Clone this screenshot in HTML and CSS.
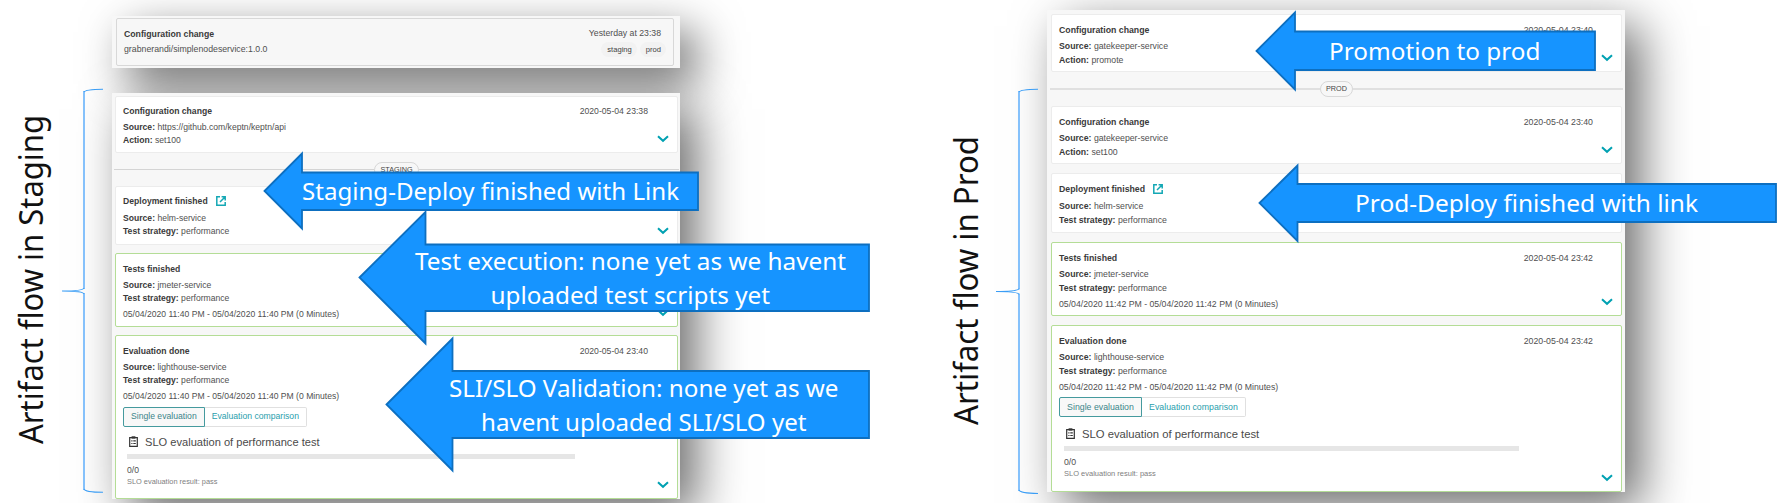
FILE: index.html
```html
<!DOCTYPE html>
<html lang="en">
<head>
<meta charset="utf-8">
<title>Artifact flow</title>
<link rel="stylesheet" href="styles.css">
</head>
<body>
<svg class="defs" width="0" height="0" aria-hidden="true">
  <symbol id="chevron" viewBox="0 0 12 8"><path d="M1 1.2 6 5.8 11 1.2" fill="none" stroke="#00a1b2" stroke-width="2"/></symbol>
  <symbol id="link" viewBox="0 0 10 10"><path d="M4 .8H.8V9.2H9.2V6M5.6 .8H9.2V4.4M9 1 4 6" fill="none" stroke="#14a8b5" stroke-width="1.5"/></symbol>
  <symbol id="clip" viewBox="0 0 9 11"><path d="M.7 1.7H8.3V10.3H.7Z" fill="none" stroke="#333" stroke-width="1.2"/><path d="M2.6 .3H6.4V2.6H2.6Z" fill="#333"/><path d="M2.3 4.8H3.5M4.3 4.8H6.8M2.3 7.5H3.5M4.3 7.5H6.8" stroke="#333" stroke-width="1.2"/></symbol>
</svg>
<main class="stage">
  <svg class="side" width="112" height="503">
    <text class="side-text" transform="translate(43 444) rotate(-90)" textLength="329" lengthAdjust="spacingAndGlyphs">Artifact flow in Staging</text>
    <path class="brace" d="M84 91V289M84 293V490"/>
    <path class="brace-tip" d="M103 89.2Q85 89.5 84 92M84 288Q83.5 291 62 291Q83.5 291 84 294M84 489Q85 492.2 103 492.3"/>
  </svg>
  <div class="column">
    <section class="summary">
      <div class="summary-card">
        <div>
          <h3 class="title">Configuration change</h3>
          <p class="image-name">grabnerandi/simplenodeservice:1.0.0</p>
        </div>
        <div class="summary-side">
          <span class="when">Yesterday at 23:38</span>
          <div class="tags"><span class="tag">staging</span><span class="tag">prod</span></div>
        </div>
      </div>
    </section>
    <section class="panel staging">
      <article class="card config">
        <div class="body"><h3 class="title">Configuration change</h3><p class="row"><b>Source:</b> https://github.com/keptn/keptn/api</p><p class="row"><b>Action:</b> set100</p></div>
        <time class="date">2020-05-04 23:38</time><svg class="chev"><use href="#chevron"/></svg>
      </article>
      <div class="divider"><span class="pill">STAGING</span></div>
      <article class="card deploy">
        <div class="body"><h3 class="title">Deployment finished <svg class="link"><use href="#link"/></svg></h3><p class="row"><b>Source:</b> helm-service</p><p class="row"><b>Test strategy:</b> performance</p></div>
        <svg class="chev"><use href="#chevron"/></svg>
      </article>
      <article class="card ok tests">
        <div class="body"><h3 class="title">Tests finished</h3><p class="row"><b>Source:</b> jmeter-service</p><p class="row"><b>Test strategy:</b> performance</p><p class="row span">05/04/2020 11:40 PM - 05/04/2020 11:40 PM (0 Minutes)</p></div>
        <svg class="chev"><use href="#chevron"/></svg>
      </article>
      <article class="card ok evaluation">
        <div class="body"><h3 class="title">Evaluation done</h3><p class="row"><b>Source:</b> lighthouse-service</p><p class="row"><b>Test strategy:</b> performance</p><p class="row span">05/04/2020 11:40 PM - 05/04/2020 11:40 PM (0 Minutes)</p>
          <div class="tabs"><span class="tab active">Single evaluation</span><span class="tab">Evaluation comparison</span></div>
          <div class="slo"><h4 class="slo-title"><svg class="clip"><use href="#clip"/></svg>SLO evaluation of performance test</h4><div class="bar"></div><p class="score">0/0</p><p class="result">SLO evaluation result: pass</p></div></div>
        <time class="date">2020-05-04 23:40</time><svg class="chev"><use href="#chevron"/></svg>
      </article>
    </section>
  </div>
  <svg class="side second" width="112" height="503">
    <text class="side-text" transform="translate(43 425) rotate(-90)" textLength="289" lengthAdjust="spacingAndGlyphs">Artifact flow in Prod</text>
    <path class="brace" d="M84 91V289.5M84 293.5V491"/>
    <path class="brace-tip" d="M103 89.2Q85 89.5 84 92M84 288.5Q83.5 291.5 61 291.5Q83.5 291.5 84 294.5M84 490Q85 493.2 103 493.5"/>
  </svg>
  <section class="panel prod">
    <article class="card config first">
      <div class="body"><h3 class="title">Configuration change</h3><p class="row"><b>Source:</b> gatekeeper-service</p><p class="row"><b>Action:</b> promote</p></div>
      <time class="date">2020-05-04 23:40</time><svg class="chev"><use href="#chevron"/></svg>
    </article>
    <div class="divider"><span class="pill">PROD</span></div>
    <article class="card config">
      <div class="body"><h3 class="title">Configuration change</h3><p class="row"><b>Source:</b> gatekeeper-service</p><p class="row"><b>Action:</b> set100</p></div>
      <time class="date">2020-05-04 23:40</time><svg class="chev"><use href="#chevron"/></svg>
    </article>
    <article class="card deploy">
      <div class="body"><h3 class="title">Deployment finished <svg class="link"><use href="#link"/></svg></h3><p class="row"><b>Source:</b> helm-service</p><p class="row"><b>Test strategy:</b> performance</p></div>
    </article>
    <article class="card ok tests">
      <div class="body"><h3 class="title">Tests finished</h3><p class="row"><b>Source:</b> jmeter-service</p><p class="row"><b>Test strategy:</b> performance</p><p class="row span">05/04/2020 11:42 PM - 05/04/2020 11:42 PM (0 Minutes)</p></div>
      <time class="date">2020-05-04 23:42</time><svg class="chev"><use href="#chevron"/></svg>
    </article>
    <article class="card ok evaluation">
      <div class="body"><h3 class="title">Evaluation done</h3><p class="row"><b>Source:</b> lighthouse-service</p><p class="row"><b>Test strategy:</b> performance</p><p class="row span">05/04/2020 11:42 PM - 05/04/2020 11:42 PM (0 Minutes)</p>
        <div class="tabs"><span class="tab active">Single evaluation</span><span class="tab">Evaluation comparison</span></div>
        <div class="slo"><h4 class="slo-title"><svg class="clip"><use href="#clip"/></svg>SLO evaluation of performance test</h4><div class="bar"></div><p class="score">0/0</p><p class="result">SLO evaluation result: pass</p></div></div>
      <time class="date">2020-05-04 23:42</time><svg class="chev"><use href="#chevron"/></svg>
    </article>
  </section>
  <svg class="callouts" width="1789" height="503">
    <path class="arrow" d="M264.500 191 302 153.500V172.500H698V210H302V228.500Z"/>
    <path class="arrow" d="M359.500 277.500 425.500 212V244.500H869V311H425.500V343.500Z"/>
    <path class="arrow" d="M386.500 404.500 452.500 338.500V371H869V438H452.500V470.500Z"/>
    <path class="arrow" d="M1256.500 51 1295 12.500V31.500H1595V70H1295V89.500Z"/>
    <path class="arrow" d="M1259.500 203 1297.500 165.500V184H1776V222H1297.500V241Z"/>
    <g class="callout-text">
      <text x="302" y="200" textLength="377" lengthAdjust="spacingAndGlyphs">Staging-Deploy finished with Link</text>
      <text x="415" y="270" textLength="431" lengthAdjust="spacingAndGlyphs">Test execution: none yet as we havent</text>
      <text x="490.500" y="304" textLength="279.500" lengthAdjust="spacingAndGlyphs">uploaded test scripts yet</text>
      <text x="449" y="397" textLength="389.500" lengthAdjust="spacingAndGlyphs">SLI/SLO Validation: none yet as we</text>
      <text x="481" y="431" textLength="325.500" lengthAdjust="spacingAndGlyphs">havent uploaded SLI/SLO yet</text>
      <text x="1329" y="60" textLength="211.500" lengthAdjust="spacingAndGlyphs">Promotion to prod</text>
      <text x="1355" y="212" textLength="343" lengthAdjust="spacingAndGlyphs">Prod-Deploy finished with link</text>
    </g>
  </svg>
</main>
</body>
</html>
```

FILE: styles.css
```css
* { box-sizing: border-box; margin: 0; padding: 0; }
body { width: 1789px; height: 503px; overflow: hidden; background: #fff; font-family: "Liberation Sans", Arial, sans-serif; color: #505050; }
svg { display: block; flex: none; }
.defs { position: absolute; }
.stage { position: relative; display: flex; align-items: flex-start; height: 503px; overflow: hidden; }

.side { position: relative; z-index: 1; }
.second { margin-left: 255px; }
.side-text { font: 32px "Noto Sans", sans-serif; fill: #111; }
.brace { fill: none; stroke: #85c1fb; stroke-width: 2; }
.brace-tip { fill: none; stroke: #3a9df5; stroke-width: 1.1; }

/* Shadows sit on a layer below both panels of the column */
.column { isolation: isolate; width: 568px; padding-top: 16px; --u: 1px; }
.summary, .panel { position: relative; background: #f7f7f7; }
.prod { isolation: isolate; }
.summary::before, .panel::before { content: ""; position: absolute; z-index: -1; inset: 0; box-shadow: 16px 16px 46px rgba(0, 0, 0, .58); }
.summary { height: 52px; padding: 2px 6px 2px 4px; }
.summary-card { display: flex; justify-content: space-between; height: 48px; padding: 7px 7px 0; border: 1px solid #d8d8d8; border-radius: 2px; }
.title { display: flex; align-items: center; height: calc(var(--u) * 16.5); font-size: calc(var(--u) * 8.62); font-weight: 700; color: #3a3a3a; white-space: pre; }
.image-name { font-size: 8.75px; line-height: 17px; }
.summary .title { font-size: 8.72px; height: 15px; }
.summary-side { display: flex; flex-direction: column; align-items: flex-end; }
.when { margin-right: 5px; font-size: 8.7px; line-height: 14px; }
.tags { display: flex; gap: 3px; margin-top: 2px; }
.tag { padding: 0 5px 0 6px; border-radius: 8px; background: #f2f2f2; font-size: 7.6px; line-height: 15px; color: #444; }

.panel { display: flex; flex-direction: column; }
.staging { height: 406px; margin-top: 25px; padding: 3px 2px 0 3px; }
.prod { --u: 1.016px; width: 578px; height: 482px; margin-top: 10px; padding: 4px 3px 0 4px; }
.card { display: flex; flex: none; padding: 6px 7px; border: 1px solid #ececec; border-radius: 2px; background: #fff; }
.ok { border-color: #b4dd96; }
.body { flex: 1; }
.row { height: calc(var(--u) * 13.8); font-size: calc(var(--u) * 8.6); line-height: calc(var(--u) * 13.8); white-space: nowrap; }
.row b { color: #3a3a3a; }
.span { margin-top: calc(var(--u) * 2.2); }
.date { margin-right: 3px; font-size: calc(var(--u) * 8.66); line-height: calc(var(--u) * 16.5); }
.chev { width: 12px; height: 8px; align-self: flex-end; margin: 0 0 3px 6px; }
.link { width: 10px; height: 10px; margin-left: 6px; }

.config { height: 57px; }
.deploy { height: 59px; }
.tests { height: 74px; margin-top: 8px; }
.evaluation { height: 164px; margin-top: 8px; }
.staging .title { margin-bottom: 1px; }
.staging .deploy .title { height: 16px; margin-bottom: 2.5px; }
.staging .ok { padding-top: 7px; }
.staging .date { margin-right: 4px; }
.staging .slo-title { margin-top: 7px; }
.prod .config { height: 58px; }
.prod .deploy { height: 60px; margin-top: 9px; }
.prod .deploy .title { height: 16px; margin-bottom: 1.5px; }
.prod .tests { margin-top: 9px; }
.prod .evaluation { height: 167px; margin-top: 9px; }
.prod .card { padding-top: 7px; }
.chev { position: relative; left: -1px; }

.divider { display: flex; align-items: center; justify-content: center; height: 33px; margin: 0 -1px; }
.divider::before, .divider::after { content: ""; flex: 1; height: 1px; background: #d4d4d4; }
.prod .divider { height: 34px; }
.prod .divider::before, .prod .divider::after { height: 2px; background: #e0e0e0; }
.pill { padding: 0 5px; border: 1px solid #d8d8d8; border-radius: 8px; font-size: 7.25px; line-height: 14px; color: #444; }

.tabs { display: flex; margin-top: calc(var(--u) * 3); }
.tab { padding: 0 calc(var(--u) * 7); border: 1px solid #e0e0e0; border-left: 0; border-radius: 0 2px 2px 0; font-size: calc(var(--u) * 8.65); line-height: calc(var(--u) * 17.8); color: #2aa0ad; }
.active { border: 1px solid #459a9e; border-radius: 2px 0 0 2px; background: #f8f8f8; color: #3c858a; }
.slo { margin-left: 5px; }
.staging .slo { margin-left: 4px; }
.slo-title { display: flex; align-items: center; height: calc(var(--u) * 16); margin-top: calc(var(--u) * 8.5); font-size: calc(var(--u) * 11.1); font-weight: 400; color: #4a4a4a; }
.clip { width: 9px; height: 11px; margin: 0 7px 0 2px; }
.bar { width: calc(var(--u) * 447.5); height: 5px; margin-top: 4px; background: #e6e6e6; }
.score { margin-top: 5px; font-size: calc(var(--u) * 8.6); line-height: calc(var(--u) * 12); }
.result { font-size: calc(var(--u) * 7.4); line-height: calc(var(--u) * 12); color: #808080; }
.evaluation .body { width: 0; }

.callouts { position: absolute; z-index: 2; left: 0; top: 0; }
.arrow { fill: #1694ff; stroke: #0d6fc0; stroke-width: 1.8; }
.callout-text { font: 24px "Noto Sans", sans-serif; fill: #fff; }
```
